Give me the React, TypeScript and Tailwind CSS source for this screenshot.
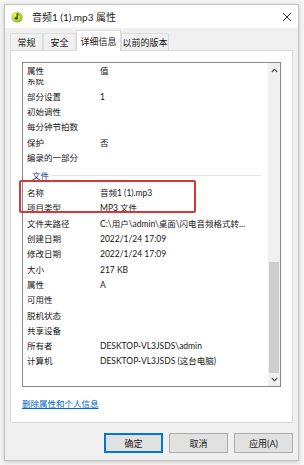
import React from 'react'

type Row = { k: string; v?: string; group?: boolean }

const ROWS: Row[] = [
  { k: '系统' },
  { k: '部分设置', v: '1' },
  { k: '初始调性' },
  { k: '每分钟节拍数' },
  { k: '保护', v: '否' },
  { k: '编录的一部分' },
  { k: '文件', group: true },
  { k: '名称', v: '音频1 (1).mp3' },
  { k: '项目类型', v: 'MP3 文件' },
  { k: '文件夹路径', v: 'C:\\用户\\admin\\桌面\\闪电音频格式转...' },
  { k: '创建日期', v: '2022/1/24 17:09' },
  { k: '修改日期', v: '2022/1/24 17:09' },
  { k: '大小', v: '217 KB' },
  { k: '属性', v: 'A' },
  { k: '可用性' },
  { k: '脱机状态' },
  { k: '共享设备' },
  { k: '所有者', v: 'DESKTOP-VL3JSDS\\admin' },
  { k: '计算机', v: 'DESKTOP-VL3JSDS (这台电脑)' },
]

function FileIcon() {
  return (
    <svg width="12" height="12" viewBox="0 0 12 12">
      <defs>
        <radialGradient id="g" cx="40%" cy="35%" r="70%">
          <stop offset="0%" stopColor="#f4f27a" />
          <stop offset="60%" stopColor="#c8d43a" />
          <stop offset="100%" stopColor="#6fa82a" />
        </radialGradient>
      </defs>
      <circle cx="6" cy="6" r="5.6" fill="url(#g)" />
      <path d="M6.6 2.6v4.6a1.4 1.2 0 1 1-0.8-1.1V2.6h0.8z M6.6 2.6c0.8 0.4 1.6 0.9 1.6 2" fill="#2d5a12" stroke="#2d5a12" strokeWidth="0.5" />
    </svg>
  )
}

function Chevron({ down }: { down?: boolean }) {
  return (
    <svg width="7" height="5" viewBox="0 0 7 5">
      <path d={down ? 'M0.8 1l2.7 2.8L6.2 1' : 'M0.8 4l2.7-2.8L6.2 4'} fill="none" stroke="#505050" strokeWidth="1.1" />
    </svg>
  )
}

function Tab({ label, active, w }: { label: string; active?: boolean; w: string }) {
  return (
    <div
      className={
        active
          ? `${w} h-[21px] -mb-px relative z-10 bg-white border border-[#d9d9d9] border-b-0 flex items-center justify-center`
          : `${w} h-[17px] bg-[#f0f0f0] border border-[#dcdcdc] border-b-0 flex items-center justify-center`
      }
    >
      {label}
    </div>
  )
}

export default function App() {
  return (
    <div className="w-[304px] h-[465px] bg-[#f5f5f5] pt-[4px] pl-[4px] font-['Lato','Noto_Sans_CJK_SC',sans-serif] text-[9px] text-[#161616] leading-none">
      <div className="w-[295px] h-[457px] bg-[#f0f0f0] border border-[#c4c4c4] shadow-[0_1px_4px_rgba(0,0,0,0.2)] flex flex-col">
        {/* title bar */}
        <div className="h-[23px] bg-white flex items-center pl-[6px] pr-[6px]">
          <FileIcon />
          <span className="ml-[9px] text-[10px] text-[#1a1a1a]">音频1 (1).mp3 属性</span>
          <svg className="ml-auto" width="10" height="10" viewBox="0 0 10 10">
            <path d="M1 1l8 8M9 1l-8 8" stroke="#333" strokeWidth="1" />
          </svg>
        </div>

        {/* tabs */}
        <div className="mt-[2px] px-[5px] h-[20px] flex items-end">
          <Tab label="常规" w="w-[33px]" />
          <Tab label="安全" w="w-[33px]" />
          <Tab label="详细信息" w="w-[45px]" active />
          <Tab label="以前的版本" w="w-[48px]" />
        </div>

        {/* panel */}
        <div className="mx-[5px] h-[373px] bg-white border border-[#d9d9d9] relative pt-[11px] pl-[11px] text-[8.5px]">
          <div className="w-[259px] h-[325px] border border-[#828790] flex">
            <div className="flex-1 flex flex-col min-w-0">
              <div className="h-[16px] flex items-center shrink-0">
                <div className="w-[77px] pl-[4px]">属性</div>
                <div>值</div>
              </div>
              <div className="flex-1 overflow-hidden">
                <div className="-mt-[5px]">
                  {ROWS.map((r) =>
                    r.group ? (
                      <div key={r.k} className="h-[20px] flex items-center pl-[9px] pr-[7px]">
                        <span className="text-[#1e3a8a]">{r.k}</span>
                        <div className="flex-1 h-px bg-[#e3e6ec] ml-[3px]" />
                      </div>
                    ) : (
                      <div key={r.k} className="h-[15.3px] flex items-center">
                        <div className="w-[77px] pl-[4px] shrink-0">{r.k}</div>
                        <div className="whitespace-nowrap">{r.v}</div>
                      </div>
                    )
                  )}
                </div>
              </div>
            </div>
            {/* scrollbar */}
            <div className="w-[12px] bg-[#f0f0f0] flex flex-col">
              <div className="h-[14px] flex items-center justify-center">
                <Chevron />
              </div>
              <div className="flex-1 flex flex-col justify-end">
                <div className="h-[111px] mx-[1px] bg-[#cdcdcd]" />
              </div>
              <div className="h-[13px] flex items-center justify-center">
                <Chevron down />
              </div>
            </div>
          </div>

          <div className="mt-[13px] text-[#0066cc] underline">删除属性和个人信息</div>

          {/* highlight box */}
          <div className="absolute left-[8px] top-[129px] w-[177px] h-[33px] border-2 border-[#d23a3a] rounded-[2px]" />
        </div>

        {/* buttons */}
        <div className="mt-[10px] pr-[5px] flex justify-end gap-[6px]">
          <button className="w-[59px] h-[20px] bg-[#e1e1e1] border border-[#0078d7] shadow-[inset_0_0_0_1px_#0078d7] text-[9px]">确定</button>
          <button className="w-[59px] h-[20px] bg-[#e1e1e1] border border-[#adadad] text-[9px]">取消</button>
          <button className="w-[59px] h-[20px] bg-[#e1e1e1] border border-[#adadad] text-[9px]">应用(A)</button>
        </div>
      </div>
    </div>
  )
}
